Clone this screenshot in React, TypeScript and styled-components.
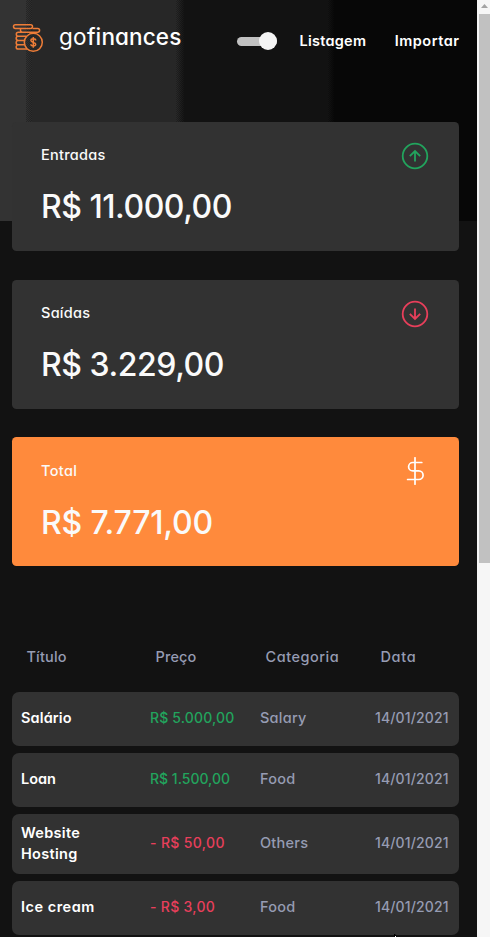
import React from "react";
import styled, { createGlobalStyle } from "styled-components";

const GlobalStyle = createGlobalStyle`
  * { box-sizing: border-box; }
  body {
    margin: 0;
    background: #121212;
    color: #fff;
    font-family: Inter, "Open Sans", sans-serif;
    font-feature-settings: "cv11", "calt" 0;
    font-size: 14.5px;
    font-weight: 500;
  }
`;

const Window = styled.div`
  position: relative;
  display: flex;
  height: 937px;
  overflow: hidden;
`;

const Page = styled.div`
  width: 477px;
  flex: none;
`;

/* Four dark bands with a dithered seam between neighbours. */
const Banner = styled.div`
  height: 221px;
  margin-bottom: -99px;
  background:
    linear-gradient(90deg, #333 26px, transparent 26px 32px, #272727 32px 176px, transparent 176px 184px, #121212 184px 328px, transparent 328px 334px, #070707 334px),
    repeating-conic-gradient(rgba(0, 0, 0, 0.25) 0 25%, transparent 0 50%) 0 0 / 2px 2px,
    linear-gradient(90deg, #333 26px, #2b2b2b 32px, #2b2b2b 176px, #161616 184px, #141414 328px, #090909 334px);
`;

const Header = styled.header`
  display: flex;
  align-items: center;
  height: 122px;
  padding: 0 17px 46px 12px;
`;

const Logo = styled.div`
  display: flex;
  align-items: center;
  gap: 15px;
  width: 225px;
`;

const Text = styled.span<{ $ls?: number }>`
  display: inline-block;
  white-space: pre-line;
  letter-spacing: ${(p) => p.$ls ?? 0}px;
`;

const Brand = styled.span`
  margin-top: -2px;
  font-size: 22.5px;
  line-height: 30px;
  font-weight: 400;
  b { font-weight: 500; }
`;

const Toggle = styled.div`
  display: flex;
  align-items: center;
  justify-content: flex-end;
  width: 40px;
  height: 9px;
  margin-top: 6px;
  border-radius: 5px;
  background: #c1c1c1;
`;

const Knob = styled.div`
  width: 18px;
  height: 18px;
  border-radius: 50%;
  background: #f5f5f5;
`;

const Nav = styled.nav`
  display: flex;
  gap: 28.5px;
  margin: 6px 0 0 22.5px;
  line-height: 20px;
  font-weight: 560;
`;

const Cards = styled.section`
  display: grid;
  gap: 28.6px;
  padding: 0 18px 0 12px;
`;

const Card = styled.article<{ $accent?: boolean }>`
  height: 129px;
  padding: ${(p) => (p.$accent ? 21 : 20)}px 29px;
  border-radius: 4.5px;
  background: ${(p) => (p.$accent ? "#ff8a3c" : "#323232")};
  color: #fafafa;
`;

const CardHead = styled.div`
  display: flex;
  justify-content: space-between;
  align-items: flex-start;
  height: 40px;
  line-height: 26px;
  font-weight: 540;
`;

const Amount = styled.div`
  font-size: 32px;
  line-height: 50px;
`;

const IconBox = styled.div<{ $raised?: boolean }>`
  width: 28px;
  height: 28px;
  margin-right: 1px;
  margin-top: ${(p) => (p.$raised ? -1 : 0)}px;
  svg { display: block; }
`;

const Table = styled.section`
  display: grid;
  grid-template-columns: minmax(0, 1fr);
  gap: 7px;
  padding: 77px 18px 0 12px;
`;

const Row = styled.div<{ $tall?: boolean }>`
  display: grid;
  grid-template-columns: 129px 110px 115px minmax(0, 1fr);
  align-items: center;
  height: ${(p) => (p.$tall ? 60 : 54)}px;
  padding: 0 0 3px 9px;
  border-radius: 7px;
  background: #323232;
  color: #969cb3;
  line-height: 21px;
`;

const HeadRow = styled(Row)`
  height: 42px;
  padding: 0 0 16px 14.5px;
  background: none;
  font-weight: 450;
`;

const Title = styled(Text)`
  color: #fff;
  font-weight: 560;
`;

const Figure = styled(Text)`
  font-size: 14px;
`;

const Price = styled(Figure)<{ $out: boolean }>`
  color: ${(p) => (p.$out ? "#e83f5b" : "#22a45d")};
`;

const ScrollBar = styled.div`
  width: 13px;
  padding-left: 2px;
  background: #f6f6f6;
`;

const ScrollUp = styled.div`
  display: flex;
  justify-content: center;
  padding-top: 4px;
  height: 14px;
`;

const Thumb = styled.div`
  height: 549px;
  background: #c1c1c1;
`;

const Pointer = styled.svg`
  position: absolute;
  left: 394px;
  top: 934px;
`;

const CoinsIcon = () => (
  <svg width="32" height="30" viewBox="0 0 32 30" fill="none" stroke="#ee7d38" strokeWidth="1.5">
    <rect x="1.5" y="1.8" width="19" height="3.6" rx="1.8" />
    <path d="M8.5 5.4v1.900a1.900 1.900 0 0 0 1.900 1.900M20.500 5.400h5.200a1.900 1.900 0 0 1 0 3.800H6.300a2 2 0 0 0-2 2 2 2 0 0 0 2 2h8M6.300 13.200a2.100 2.100 0 0 0 0 4.300h5.700M6.300 17.500a2.100 2.100 0 0 0 0 4.300h5.700M6.300 21.800a2.100 2.100 0 0 0 0 4.300h9" />
    <circle cx="21.300" cy="19.300" r="9" />
    <path d="M23.700 17.400c0-1.100-1-1.600-2.400-1.600s-2.400.6-2.400 1.700c0 2.600 4.800 1.200 4.800 3.800 0 1.100-1 1.700-2.400 1.700s-2.400-.6-2.400-1.700M21.300 14v10.800" />
  </svg>
);

const ArrowIcon = ({ down }: { down?: boolean }) => (
  <svg width="28" height="28" viewBox="0 0 28 28" fill="none" stroke={down ? "#e83f5b" : "#22a45d"} strokeWidth="1.8">
    <circle cx="14" cy="14" r="12.3" />
    <path d={down ? "M14 8.5v10.500M8.800 13.800l5.200 5.200 5.200-5.200" : "M14 19.500V9M8.800 14.200l5.200-5.200 5.200 5.200"} />
  </svg>
);

const DollarIcon = () => (
  <svg width="28" height="28" viewBox="0 0 28 28" fill="none" stroke="#fff" strokeWidth="1.7" strokeLinecap="round">
    <path d="M14 .8v26.400M20.800 5.500h-9a4.200 4.200 0 0 0 0 8.400h6a4.200 4.200 0 0 1 0 8.600H6.600" />
  </svg>
);

const cards = [
  { label: "Entradas", value: "R$ 11.000,00", icon: <ArrowIcon />, ls: 0.27, vls: -0.48 },
  { label: "Saídas", value: "R$ 3.229,00", icon: <ArrowIcon down />, ls: 0.27, vls: -0.45 },
  { label: "Total", value: "R$ 7.771,00", icon: <DollarIcon />, ls: 0.35, vls: -0.18, accent: true },
];

const columns = [
  { label: "Título", ls: 0.15 },
  { label: "Preço", ls: 0.15 },
  { label: "Categoria", ls: 0.52 },
  { label: "Data", ls: 0.65 },
];

const rows = [
  { title: "Salário", price: "R$ 5.000,00", category: "Salary", ls: [0.13, 0.15, 0.25] },
  { title: "Loan", price: "R$ 1.500,00", category: "Food", ls: [0, 0, 0.2] },
  { title: "Website\nHosting", price: "- R$ 50,00", category: "Others", ls: [0.3, 0.35, 0.25], tall: true },
  { title: "Ice cream", price: "- R$ 3,00", category: "Food", ls: [0.5, 0.3, 0.2] },
];

export default function App() {
  return (
    <Window>
      <GlobalStyle />
      <Page>
        <Banner>
          <Header>
            <Logo>
              <CoinsIcon />
              <Brand><Text $ls={0.3}>go</Text><b><Text $ls={0.12}>finances</Text></b></Brand>
            </Logo>
            <Toggle><Knob /></Toggle>
            <Nav><Text $ls={0.25}>Listagem</Text><Text $ls={0.5}>Importar</Text></Nav>
          </Header>
        </Banner>
        <Cards>
          {cards.map((c) => (
            <Card key={c.label} $accent={c.accent}>
              <CardHead><Text $ls={c.ls}>{c.label}</Text><IconBox $raised={c.accent}>{c.icon}</IconBox></CardHead>
              <Amount><Text $ls={c.vls}>{c.value}</Text></Amount>
            </Card>
          ))}
        </Cards>
        <Table>
          <HeadRow>
            {columns.map((c) => <Text key={c.label} $ls={c.ls}>{c.label}</Text>)}
          </HeadRow>
          {rows.map((r) => (
            <Row key={r.title} $tall={r.tall}>
              <Title $ls={r.ls[0]}>{r.title}</Title>
              <Price $ls={r.ls[1]} $out={r.price.startsWith("-")}>{r.price}</Price>
              <Text $ls={r.ls[2]}>{r.category}</Text>
              <Figure $ls={0.15}>14/01/2021</Figure>
            </Row>
          ))}
        </Table>
      </Page>
      <ScrollBar>
        <ScrollUp><svg width="7" height="4" viewBox="0 0 7 4"><path d="M0 4 3.5 0 7 4z" fill="#a3a3a3" /></svg></ScrollUp>
        <Thumb />
      </ScrollBar>
      <Pointer width="3" height="3" viewBox="0 0 3 3"><path d="M0 0h1l2 3H0z" fill="#000" /><path d="M1 2h1v1H1z" fill="#fff" /></Pointer>
    </Window>
  );
}
